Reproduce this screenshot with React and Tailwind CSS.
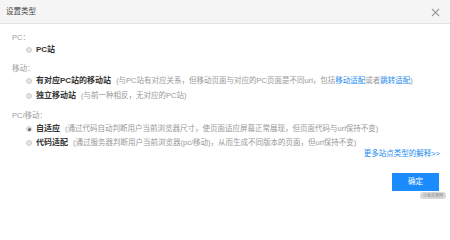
import React from "react";

function Radio({ checked }) {
  return (
    <span className="w-[6px] h-[6px] rounded-full border border-[#cfcfcf] bg-[#e4e4e4] flex items-center justify-center shrink-0">
      {checked && <span className="w-[3px] h-[3px] rounded-full bg-[#666]" />}
    </span>
  );
}

function Row({ checked, title, children, className = "" }) {
  return (
    <div className={"flex items-center h-[10px] pl-[14px] gap-[4px] whitespace-nowrap " + className}>
      <Radio checked={checked} />
      <span className="text-[8px] leading-[10px] font-bold text-[#333]">{title}</span>
      {children && (
        <span className="text-[7.5px] leading-[10px] text-[#999] ml-[1px]">{children}</span>
      )}
    </div>
  );
}

function Label({ children, className = "" }) {
  return <div className={"text-[7.5px] leading-[10px] h-[10px] text-[#a0a0a0] " + className}>{children}</div>;
}

export default function App() {
  return (
    <div
      className="w-[450px] h-[201px] bg-white relative overflow-hidden"
      style={{ fontFamily: '"Liberation Sans","Noto Sans CJK SC",sans-serif' }}
    >
      <div className="h-[24px] bg-[#f5f5f5] border-b border-[#e3e3e3] flex items-center justify-between pl-[6px] pr-[10px]">
        <span className="text-[7.5px] text-[#444]">设置类型</span>
        <svg width="9" height="9" viewBox="0 0 9 9" className="mt-[1px]">
          <path d="M1 1 L8 8 M8 1 L1 8" stroke="#9a9a9a" strokeWidth="1.1" />
        </svg>
      </div>
      <div className="pl-[12px] pr-[10px] flex flex-col">
        <Label className="mt-[9px]">PC：</Label>
        <Row title="PC站" className="mt-[2px]" />
        <Label className="mt-[9px]">移动：</Label>
        <Row title="有对应PC站的移动站" className="mt-[2px]">
          (与PC站有对应关系，但移动页面与对应的PC页面是不同url，包括
          <span className="text-[#1a8cf0]">移动适配</span>或者<span className="text-[#1a8cf0]">跳转适配</span>)
        </Row>
        <Row title="独立移动站" className="mt-[5px]">(与前一种相反，无对应的PC站)</Row>
        <Label className="mt-[10px]">PC/移动：</Label>
        <Row checked title="自适应" className="mt-[3px]">
          (通过代码自动判断用户当前浏览器尺寸，使页面适应屏幕正常展现，但页面代码与url保持不变)
        </Row>
        <Row title="代码适配" className="mt-[4px]">
          (通过服务器判断用户当前浏览器(pc/移动)，从而生成不同版本的页面，但url保持不变)
        </Row>
        <div className="flex justify-end mt-[1px]">
          <span className="text-[7.5px] leading-[10px] text-[#1a8cf0]">更多站点类型的解释&gt;&gt;</span>
        </div>
        <div className="flex justify-end mt-[14px] pr-[1px]">
          <button className="w-[47px] h-[18px] bg-[#1a8cff] text-white text-[7.5px] flex items-center justify-center">
            确定
          </button>
        </div>
      </div>
      <div className="absolute right-[4px] bottom-[2px] h-[7px] px-[3px] rounded-[3px] bg-[#d8d8d8] text-[4px] leading-[7px] text-[#888] whitespace-nowrap">
        小鱼资源网
      </div>
    </div>
  );
}
